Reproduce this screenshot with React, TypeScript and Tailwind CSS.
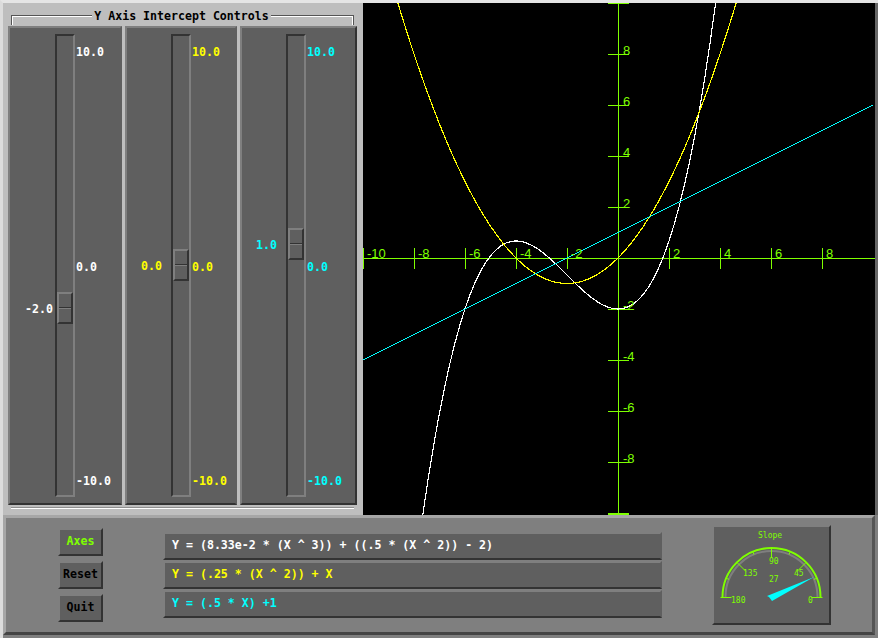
import React from "react";

const sliders = [
    { value: -2, text: "-2.0", color: "text-white", track: "ml-[45px]", gap: "mr-[4px]", panel: "w-[114px] border-r-[#5f5f5f]" },
    { value: 0, text: "0.0", color: "text-[#ffff00]", track: "ml-[44px]", gap: "mr-[11px]", panel: "w-[112px] border-r-[#5f5f5f]" },
    { value: 1, text: "1.0", color: "text-[#00ffff]", track: "ml-[44px]", gap: "mr-[11px]", panel: "w-[117px] border-r-[#333333]" },
];

const curves = [
    { color: "#ffffff", fn: (x: number) => 0.0833 * x * x * x + 0.5 * x * x - 2 },
    { color: "#ffff00", fn: (x: number) => 0.25 * x * x + x },
    { color: "#00ffff", fn: (x: number) => 0.5 * x + 1 },
];

const equations = [
    { text: "Y = (8.33e-2 * (X ^ 3)) + ((.5 * (X ^ 2)) - 2)", color: "text-white" },
    { text: "Y = (.25 * (X ^ 2)) + X", color: "text-[#ffff00]" },
    { text: "Y = (.5 * X) +1", color: "text-[#00ffff]" },
];

const ticks = [-10, -8, -6, -4, -2, 2, 4, 6, 8];

function Slider({ s }: any) {
    return (
        <div className={`${s.panel} h-full flex box-border border-2 border-t-[#7f7f7f] border-l-[#7f7f7f] border-b-[#333333] bg-[#5f5f5f] py-[6px]`}>
            <div className={`${s.track} relative w-[20px] h-full box-border border-2 border-t-[#333333] border-l-[#333333] border-r-[#7f7f7f] border-b-[#7f7f7f]`}>
                <div
                    className={`absolute right-full ${s.gap} ${s.color} h-[14px] leading-[14px] whitespace-pre`}
                    style={{ top: 223 - 21.4 * s.value }}
                >
                    {s.text}
                </div>
                <div
                    className="absolute left-0 w-[16px] h-[32px] box-border border-2 border-t-[#7f7f7f] border-l-[#7f7f7f] border-r-[#333333] border-b-[#333333] flex flex-col justify-center"
                    style={{ top: 213 - 21.4 * s.value }}
                >
                    <div className="h-px bg-[#333333]"></div>
                    <div className="h-px bg-[#7f7f7f]"></div>
                </div>
            </div>
            <div className={`ml-px flex flex-col justify-between pt-[11px] pb-[9px] ${s.color}`}>
                <div className="h-[14px] leading-[14px]">10.0</div>
                <div className="h-[14px] leading-[14px]">0.0</div>
                <div className="h-[14px] leading-[14px]">-10.0</div>
            </div>
        </div>
    );
}

function Plot() {
    const px = (x: number) => 255 + 25.5 * x;
    const py = (y: number) => 255 - 25.5 * y;
    const lineProps = { stroke: "#7fff00", strokeWidth: 1 };
    const label = "fill-[#7fff00] text-[13px] font-normal font-['Liberation_Sans',sans-serif]";
    return (
        <svg width="512" height="512" shapeRendering="crispEdges" className="bg-black shrink-0">
            <line x1="0" y1="255.5" x2="512" y2="255.5" {...lineProps} />
            <line x1="255.5" y1="0" x2="255.5" y2="512" {...lineProps} />
            <line x1="245" y1="0.5" x2="266" y2="0.5" {...lineProps} />
            <line x1="245" y1="511.5" x2="266" y2="511.5" {...lineProps} />
            {ticks.map((t) => (
                <g key={t}>
                    <line x1={Math.round(px(t)) + 0.5} y1="245" x2={Math.round(px(t)) + 0.5} y2="266" {...lineProps} />
                    <line x1="245" y1={Math.round(py(t)) + 0.5} x2="266" y2={Math.round(py(t)) + 0.5} {...lineProps} />
                </g>
            ))}
            {curves.map((c) => {
                const points: string[] = [];
                for (let x = -10; x <= 10.01; x += 0.2) {
                    points.push(px(x).toFixed(1) + "," + py(c.fn(x)).toFixed(1));
                }
                return <polyline key={c.color} points={points.join(" ")} fill="none" stroke={c.color} strokeWidth="1.15" />;
            })}
            {ticks.map((t) => (
                <g key={t}>
                    <text x={px(t) + 4} y="255" className={label}>{t}</text>
                    {t !== -10 && <text x="260" y={py(t) + 1} className={label}>{t}</text>}
                </g>
            ))}
        </svg>
    );
}

function Gauge() {
    const cx = 57.5;
    const cy = 70;
    const r = 49;
    const tick = (deg: number, len: number) => {
        const a = (deg * Math.PI) / 180;
        return (
            <line
                key={deg}
                x1={cx + r * Math.cos(a)}
                y1={cy - r * Math.sin(a)}
                x2={cx + (r - len) * Math.cos(a)}
                y2={cy - (r - len) * Math.sin(a)}
                stroke="#7fff00"
                strokeWidth="1"
            />
        );
    };
    const label = "fill-[#7fff00] text-[8px] font-normal font-['DejaVu_Sans_Mono',monospace]";
    return (
        <div className="ml-[50px] mt-[7px] w-[119px] h-[100px] box-border border-2 border-t-[#7f7f7f] border-l-[#7f7f7f] border-r-[#333333] border-b-[#333333] bg-[#5f5f5f]">
            <svg width="115" height="96" className="block">
                <path d={`M ${cx - r + 3} ${cy} A ${r - 3} ${r - 3} 0 0 1 ${cx + r - 3} ${cy}`} fill="none" stroke="#7f7f7f" strokeWidth="2" />
                <path d={`M ${cx - r} ${cy} A ${r} ${r} 0 0 1 ${cx + r} ${cy}`} fill="none" stroke="#7fff00" strokeWidth="2" />
                <line x1={cx - r - 2} y1={cy + 0.5} x2={cx - r + 9} y2={cy + 0.5} stroke="#7fff00" strokeWidth="1" />
                <line x1={cx + r - 9} y1={cy + 0.5} x2={cx + r + 2} y2={cy + 0.5} stroke="#7fff00" strokeWidth="1" />
                {tick(22.5, 3)}
                {tick(45, 13)}
                {tick(67.5, 3)}
                {tick(90, 10)}
                {tick(112.5, 3)}
                {tick(135, 13)}
                {tick(157.5, 3)}
                <text x="44" y="11" className={label}>Slope</text>
                <text x="55" y="37" className={label}>90</text>
                <text x="29" y="49" className={label}>135</text>
                <text x="80" y="49" className={label}>45</text>
                <text x="55" y="55" className={label}>27</text>
                <text x="17" y="76" className={label}>180</text>
                <text x="94" y="76" className={label}>0</text>
                <polygon points="53,69 100,50 58,74 55,70" fill="#00ffff" />
            </svg>
        </div>
    );
}

export default function App() {
    return (
        <div className="w-[878px] h-[638px] box-border border-t-[3px] border-l-[3px] border-t-[#e5e5e5] border-l-[#dcdcdc] bg-[#7f7f7f] font-['DejaVu_Sans_Mono','Liberation_Mono',monospace] font-bold text-[11.6px] overflow-hidden">
            <div className="flex h-[512px]">
                <div className="w-[360px] h-full flex flex-col bg-[#bebebe]">
                    <div className="h-[23px] shrink-0 flex items-start px-[8px] pt-[12px]">
                        <div className="w-[81px] h-[10px] border-t border-l border-[#555555]">
                            <div className="h-full border-t border-l border-white"></div>
                        </div>
                        <div className="w-[179px] -mt-[6px] h-[14px] leading-[14px] text-center text-black whitespace-pre">Y Axis Intercept Controls</div>
                        <div className="w-[83px] h-[10px] border-t border-r border-[#555555]">
                            <div className="h-full border-t border-r border-white"></div>
                        </div>
                    </div>
                    <div className="flex h-[479px] ml-[5px] gap-[3px]">
                        {sliders.map((s) => <Slider key={s.text} s={s} />)}
                    </div>
                    <div className="mt-[2px] ml-[8px] w-[343px] h-[2px] border-t border-[#8f8f8f] bg-white"></div>
                </div>
                <Plot />
                <div className="flex-1 bg-[#666666]"></div>
            </div>
            <div className="flex items-start w-[872px] h-[120px] box-border border-[3px] border-t-[#a6a6a6] border-l-[#a6a6a6] border-r-[#555555] border-b-[#444444]">
                <div className="ml-[52px] mt-[10px] flex flex-col gap-[5px]">
                    <div className="w-[45px] h-[28px] box-border border-2 border-t-[#7f7f7f] border-l-[#7f7f7f] border-r-[#333333] border-b-[#333333] bg-[#5f5f5f] flex items-center justify-center text-[#7fff00]">Axes</div>
                    <div className="w-[45px] h-[28px] box-border border-2 border-t-[#7f7f7f] border-l-[#7f7f7f] border-r-[#333333] border-b-[#333333] bg-[#5f5f5f] flex items-center justify-center text-black">Reset</div>
                    <div className="w-[45px] h-[28px] box-border border-2 border-t-[#7f7f7f] border-l-[#7f7f7f] border-r-[#333333] border-b-[#333333] bg-[#5f5f5f] flex items-center justify-center text-black">Quit</div>
                </div>
                <div className="ml-[60px] mt-[14px] w-[499px] flex flex-col gap-px">
                    {equations.map((e) => (
                        <div key={e.text} className={`h-[28px] box-border border-2 border-t-[#7f7f7f] border-l-[#7f7f7f] border-r-[#5f5f5f] border-b-[#333333] bg-[#5f5f5f] flex items-center pl-[7px] whitespace-pre ${e.color}`}>
                            {e.text}
                        </div>
                    ))}
                </div>
                <Gauge />
            </div>
        </div>
    );
}
